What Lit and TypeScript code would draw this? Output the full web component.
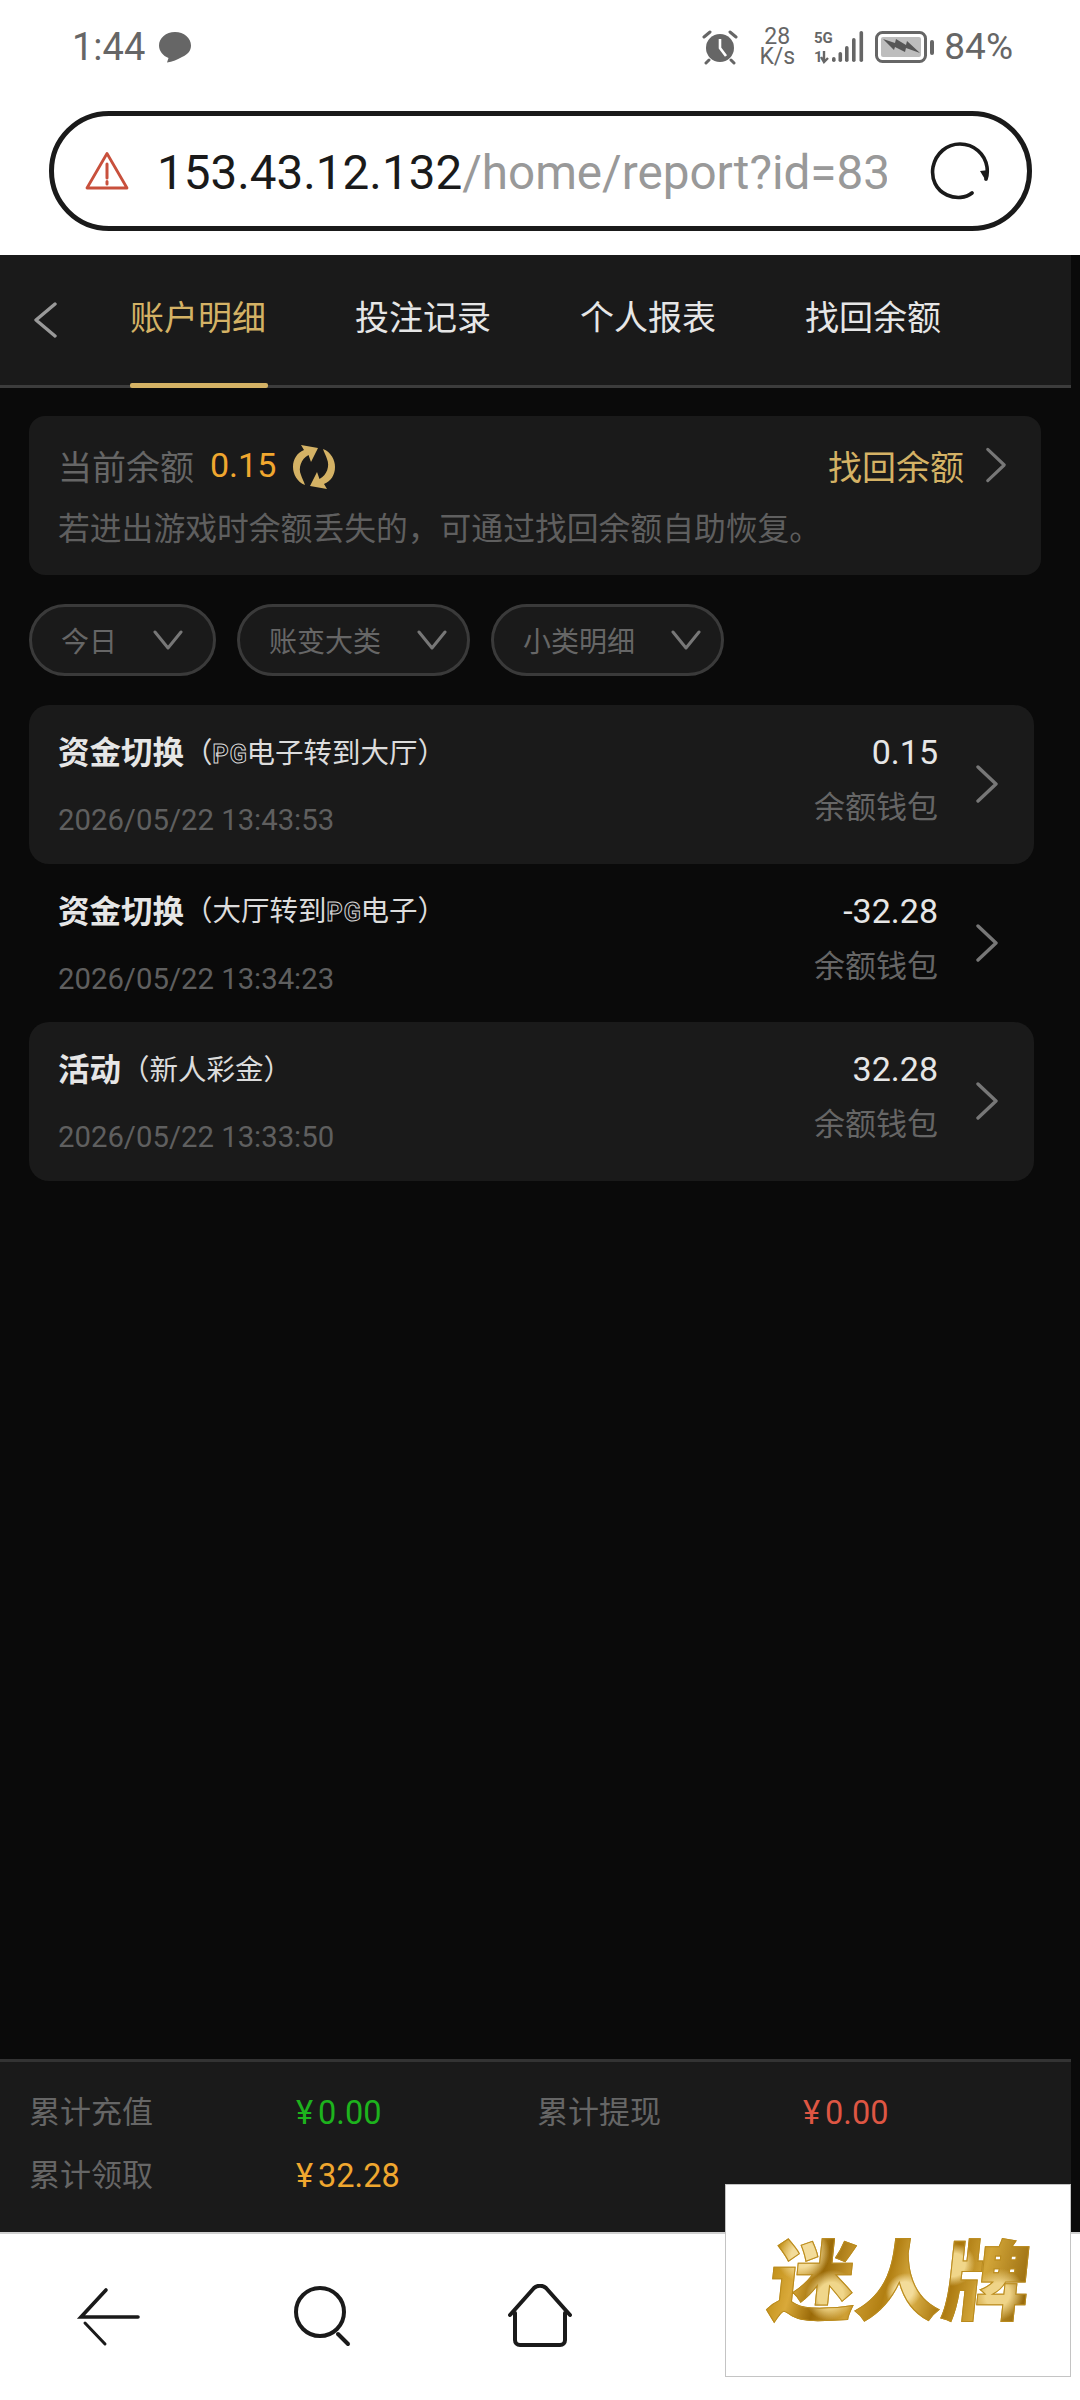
import { html, css, svg, LitElement } from 'lit';
import { customElement } from 'lit/decorators.js';

const tabs = ['账户明细', '投注记录', '个人报表', '找回余额'];
const chips = ['今日', '账变大类', '小类明细'];

const rows = [
  { title: '资金切换', before: '（', pg: true, after: '电子转到大厅）', time: '2026/05/22 13:43:53', amount: '0.15', card: true },
  { title: '资金切换', before: '（大厅转到', pg: true, after: '电子）', time: '2026/05/22 13:34:23', amount: '-32.28', card: false },
  { title: '活动', before: '（新人彩金）', pg: false, after: '', time: '2026/05/22 13:33:50', amount: '32.28', card: true },
];

const chevronRight = (cls: string) => html`<svg class=${cls} viewBox="0 0 24 38" fill="none" stroke="currentColor" stroke-width="3.4" stroke-linecap="round" stroke-linejoin="round"><path d="M3 2 L21 19 L3 36"/></svg>`;

const bolt = svg`<path d="M8 8 L20 12 L21 8 L31 14 L32 10 L45 22 L31 17 L30 21 L20 16 L19 19 Z" fill="#555"/>`;

@customElement('app-root')
export class AppRoot extends LitElement {
  static styles = css`
    :host {
      display: flex;
      flex-direction: column;
      width: 1080px;
      height: 2400px;
      position: relative;
      background: #fff;
      font-family: Roboto, 'Noto Sans CJK SC', sans-serif;
      overflow: hidden;
    }
    svg { display: block; flex: none; }

    /* phone chrome */
    .top { height: 255px; flex: none; box-sizing: border-box; padding-top: 22px; }
    .status { display: flex; align-items: center; height: 50px; padding: 0 67px 0 72px; color: #666; }
    .clock { font-size: 38px; line-height: 50px; width: 87px; }
    .bubble { width: 34px; height: 32px; margin-left: -1px; }
    .status-right { margin-left: auto; display: flex; align-items: center; }
    .alarm { width: 36px; height: 36px; margin-right: 20px; }
    .speed { width: 38px; margin-right: 18px; font-size: 23px; line-height: 20px; text-align: center; }
    .signal { width: 52px; height: 40px; margin: 6px 9px 0 0; }
    .battery { width: 60px; height: 32px; margin-right: 9px; }
    .pct { font-size: 37px; line-height: 50px; }

    .url {
      display: flex;
      align-items: center;
      box-sizing: border-box;
      width: 983px;
      height: 120px;
      margin: 39px 0 0 49px;
      padding: 0 37px 0 31px;
      border: 5px solid #1a1a1a;
      border-radius: 60px;
    }
    .warn { width: 44px; height: 40px; margin-right: 28px; }
    .url-text {
      width: 730px;
      margin-top: 4px;
      overflow: hidden;
      white-space: nowrap;
      font-size: 47.6px;
      line-height: 60px;
      color: #999;
    }
    .url-text b { font-weight: 400; color: #1a1a1a; }
    .reload { width: 60px; height: 60px; margin-left: auto; }

    /* page */
    .page { flex: 1; display: flex; flex-direction: column; width: 1071px; min-height: 0; box-shadow: 9px 0 0 #0a0a0a; background: #0a0a0a; }
    .nav {
      flex: none;
      display: flex;
      height: 133px;
      box-sizing: border-box;
      background: #1a1a1a;
      border-bottom: 3px solid #3c3c3c;
      position: relative;
    }
    .back { width: 24px; height: 36px; color: #999; margin: 47px 73px 0 33px; }
    .tab {
      position: relative;
      width: 137px;
      margin-right: 88px;
      font-size: 34px;
      line-height: 50px;
      padding-top: 38px;
      color: #e6e6e6;
      white-space: nowrap;
    }
    .tab.on { color: #d4b265; }
    .tab.on::after {
      content: '';
      position: absolute;
      left: 0;
      right: -1px;
      bottom: -3px;
      height: 5px;
      border-radius: 2px;
      background: #d4b265;
    }

    .main { flex: 1; padding: 28px 30px 0 29px; }
    .balance {
      box-sizing: border-box;
      height: 159px;
      padding: 24px 34px 0 29px;
      background: #1a1a1a;
      border-radius: 16px;
    }
    .balance-top { display: flex; align-items: center; height: 50px; font-size: 34px; color: #666; }
    .balance-num { color: #f0a72f; margin: 0 16px 0 16px; }
    .sync { width: 44px; height: 46px; margin-top: 4px; }
    .recover { margin-left: auto; color: #d4b265; }
    .balance-chev { width: 22px; height: 36px; margin-left: 21px; color: #777; }
    .balance-tip { margin-top: 17px; font-size: 31.8px; line-height: 44px; color: #5f5f5f; white-space: nowrap; }

    .chips { display: flex; gap: 21px; margin-top: 29px; }
    .chip {
      display: flex;
      align-items: center;
      box-sizing: border-box;
      height: 72px;
      padding: 0 20px 0 29px;
      gap: 36px;
      background: #1a1a1a;
      border: 3px solid #3a3a3a;
      border-radius: 36px;
      font-size: 28px;
      color: #666;
    }
    .chip:first-child { padding-right: 30px; }
    .chip-arrow { width: 30px; height: 20px; color: #777; }

    .list { width: 1005px; margin-top: 29px; }
    .row {
      display: flex;
      box-sizing: border-box;
      height: 158.5px;
      padding: 25px 35px 0 29px;
      border-radius: 20px;
    }
    .row.card { background: #1a1a1a; }
    .row-left { flex: 1; }
    .row-head { display: flex; align-items: center; height: 44px; margin-top: -2px; color: #dcdcdc; white-space: nowrap; }
    .row-title { font-size: 31.5px; font-weight: 700; color: #e6e6e6; }
    .row-sub { font-size: 28.5px; }
    .pg {
      display: inline-block;
      width: 34px;
      font-size: 25px;
      font-weight: 700;
      letter-spacing: 1px;
      color: #111;
      -webkit-text-stroke: 1px #d8d8d8;
    }
    .row-time { margin-top: 28px; font-size: 29.3px; line-height: 40px; color: #5f5f5f; }
    .row-right { text-align: right; }
    .row-amount { font-size: 34px; line-height: 44px; color: #e6e6e6; }
    .row-wallet { margin-top: 12px; font-size: 31px; line-height: 44px; color: #666; }
    .row-chev { width: 24px; height: 38px; margin: 35px 0 0 37px; color: #777; }

    .summary {
      flex: none;
      display: grid;
      grid-template-columns: 267px 241px 266px 1fr;
      align-content: start;
      row-gap: 19px;
      box-sizing: border-box;
      height: 173px;
      padding: 29px 0 0 29px;
      background: #1a1a1a;
      border-top: 3px solid #333;
      font-size: 31px;
      line-height: 44px;
      color: #666;
    }
    .money { font-size: 32.5px; }
    .cur { margin-right: 5px; }
    .green { color: #1db31d; }
    .red { color: #de5643; }
    .gold { color: #f0a72f; }

    /* bottom browser bar */
    .bottom {
      flex: none;
      display: flex;
      height: 168px;
      box-sizing: border-box;
      border-top: 2px solid #d0d0d0;
      background: #fff;
    }
    .bottom svg { width: 64px; height: 64px; margin-top: 50px; }
    .bottom svg:nth-child(1) { margin-left: 76px; }
    .bottom svg:nth-child(2) { margin-left: 152px; }
    .bottom svg:nth-child(3) { margin-left: 152px; }

    /* floating ad over the page corner */
    .ad {
      position: absolute;
      left: 725px;
      top: 2184px;
      width: 346px;
      height: 193px;
      box-sizing: border-box;
      display: flex;
      align-items: center;
      justify-content: center;
      background: #fff;
      border: 1.5px solid #c4c4c4;
    }
    .ad-text {
      font-family: 'Noto Sans CJK SC', sans-serif;
      font-size: 87px;
      font-weight: 900;
      line-height: 100px;
      white-space: nowrap;
      margin: -12px 0 0 4px;
      transform: skewX(-6deg);
      color: transparent;
      -webkit-text-stroke: 1px #b98a1c;
      background:
        radial-gradient(circle at 12% 30%, #f3dc9a 0 5%, transparent 11%),
        radial-gradient(circle at 24% 70%, #f0d68a 0 6%, transparent 12%),
        radial-gradient(circle at 40% 25%, #f5e2a8 0 5%, transparent 10%),
        radial-gradient(circle at 52% 66%, #f3dc9a 0 6%, transparent 12%),
        radial-gradient(circle at 70% 40%, #f0d68a 0 6%, transparent 11%),
        radial-gradient(circle at 88% 70%, #efd488 0 5%, transparent 11%),
        linear-gradient(100deg, #b8860b 0%, #d9a93a 12%, #9a6a08 22%, #cfa035 34%, #b27f12 46%, #dcb34c 56%, #a8750c 68%, #d2a538 80%, #8f6207 100%);
      -webkit-background-clip: text;
      background-clip: text;
    }
  `;

  render() {
    return html`
      <div class="top">
        <div class="status">
          <span class="clock">1:44</span>
          <svg class="bubble" viewBox="0 0 34 32"><path d="M17 1C8 1 1 7 1 14.500C1 20 5 25 10.500 27L9 31.500C14 31 20 28.500 24 26C30 23.500 33 19.500 33 14.500C33 7 26 1 17 1Z" fill="#666"/></svg>
          <div class="status-right">
            <svg class="alarm" viewBox="0 0 36 36">
              <circle cx="18" cy="19" r="14" fill="#666"/>
              <path d="M18 10V19L24 27" fill="none" stroke="#fff" stroke-width="2.600"/>
              <path d="M2 8L8 3M34 8L28 3M7 31L4 34M29 31L32 34" stroke="#666" stroke-width="3" stroke-linecap="round"/>
            </svg>
            <div class="speed">28<br />K/s</div>
            <svg class="signal" viewBox="0 0 52 40" fill="#666">
              <text x="0" y="13" font-size="15" font-weight="700" font-family="Roboto, sans-serif">5G</text>
              <text x="0" y="32" font-size="15" font-weight="700" font-family="Roboto, sans-serif">1</text>
              <path d="M10 21V32M7 27L10 32L14 28" fill="none" stroke="#666" stroke-width="2.400"/>
              <rect x="18" y="27" width="3.600" height="5" rx="1.800"/>
              <rect x="24.500" y="22" width="3.600" height="10" rx="1.800"/>
              <rect x="31" y="16" width="3.600" height="16" rx="1.800"/>
              <rect x="38" y="8" width="3.600" height="24" rx="1.800"/>
              <rect x="45.500" y="1" width="3.600" height="31" rx="1.800"/>
            </svg>
            <svg class="battery" viewBox="0 0 60 32">
              <rect x="1.500" y="1.500" width="49" height="29" rx="6" fill="none" stroke="#666" stroke-width="3"/>
              <rect x="6" y="6" width="40" height="20" rx="2" fill="#bdbdbd"/>
              ${bolt}
              <rect x="55" y="9" width="4" height="15" rx="2" fill="#666"/>
            </svg>
            <span class="pct">84%</span>
          </div>
        </div>
        <div class="url">
          <svg class="warn" viewBox="0 0 44 40" fill="none" stroke="#c8503c" stroke-width="2.800" stroke-linejoin="round">
            <path d="M22 2.500L42 37H2Z"/>
            <path d="M22 13V27M22 30.500V33" stroke-width="3" stroke-linecap="round"/>
          </svg>
          <div class="url-text"><b>153.43.12.132</b>/home/report?id=83</div>
          <svg class="reload" viewBox="0 0 60 60" fill="none" stroke="#1a1a1a" stroke-width="3.600" stroke-linecap="round">
            <path d="M42 52C36 57 26 58 17 54C6 49 1 38 3 26C6 12 17 3 30 3C44 3 55 13 57 26C57.500 30 57.500 34 56 38"/>
            <path d="M50 30L56 40L59 29Z" fill="#1a1a1a" stroke="none"/>
          </svg>
        </div>
      </div>

      <div class="page">
        <div class="nav">
          <svg class="back" viewBox="0 0 24 36" fill="none" stroke="currentColor" stroke-width="3.400" stroke-linecap="round" stroke-linejoin="round"><path d="M22 2L3 18L22 34"/></svg>
          ${tabs.map((t, i) => html`<div class="tab ${i === 0 ? 'on' : ''}">${t}</div>`)}
        </div>

        <div class="main">
          <div class="balance">
            <div class="balance-top">
              <span>当前余额</span>
              <span class="balance-num">0.15</span>
              <svg class="sync" viewBox="0 0 44 46" fill="#d4b265">
                <path d="M9 1L26 4L19 18L16.500 11C9 15 6 24 9 31C10 34 12 38 13 41C5 38 1 30 1 23C1 15 5 9 12 6Z"/>
                <path d="M35 45L18 42L25 28L27.500 35C35 31 38 22 35 15C34 12 32 8 31 5C39 8 43 16 43 23C43 31 39 37 32 40Z"/>
              </svg>
              <span class="recover">找回余额</span>
              ${chevronRight('balance-chev')}
            </div>
            <div class="balance-tip">若进出游戏时余额丢失的，可通过找回余额自助恢复。</div>
          </div>

          <div class="chips">
            ${chips.map(
              c => html`<div class="chip">
                <span>${c}</span>
                <svg class="chip-arrow" viewBox="0 0 30 20" fill="none" stroke="currentColor" stroke-width="3" stroke-linecap="round" stroke-linejoin="round"><path d="M2 2L15 18L28 2"/></svg>
              </div>`,
            )}
          </div>

          <div class="list">
            ${rows.map(
              r => html`<div class="row ${r.card ? 'card' : ''}">
                <div class="row-left">
                  <div class="row-head">
                    <span class="row-title">${r.title}</span>
                    <span class="row-sub">${r.before}${r.pg ? html`<span class="pg">PG</span>` : ''}${r.after}</span>
                  </div>
                  <div class="row-time">${r.time}</div>
                </div>
                <div class="row-right">
                  <div class="row-amount">${r.amount}</div>
                  <div class="row-wallet">余额钱包</div>
                </div>
                ${chevronRight('row-chev')}
              </div>`,
            )}
          </div>
        </div>

        <div class="summary">
          <span>累计充值</span><span class="money green"><span class="cur">¥</span>0.00</span>
          <span>累计提现</span><span class="money red"><span class="cur">¥</span>0.00</span>
          <span>累计领取</span><span class="money gold"><span class="cur">¥</span>32.28</span>
        </div>
      </div>

      <div class="bottom">
        <svg viewBox="0 0 64 64" fill="none" stroke="#1a1a1a" stroke-width="3" stroke-linecap="round">
          <path d="M30 6L5 33H62" stroke-width="3.600"/>
          <path d="M9 39L29 60"/>
        </svg>
        <svg viewBox="0 0 64 64" fill="none" stroke="#1a1a1a" stroke-width="4" stroke-linecap="round">
          <circle cx="28" cy="28" r="24"/>
          <path d="M46 50L56 60"/>
        </svg>
        <svg viewBox="0 0 64 64" fill="none" stroke="#1a1a1a" stroke-width="4" stroke-linecap="round" stroke-linejoin="round">
          <path d="M2 31L26 4C29 1 35 1 38 4L62 31"/>
          <path d="M7 29V56C7 59 9 61 12 61H52C55 61 57 59 57 56V29"/>
        </svg>
      </div>

      <div class="ad"><span class="ad-text">迷人牌</span></div>
    `;
  }
}
